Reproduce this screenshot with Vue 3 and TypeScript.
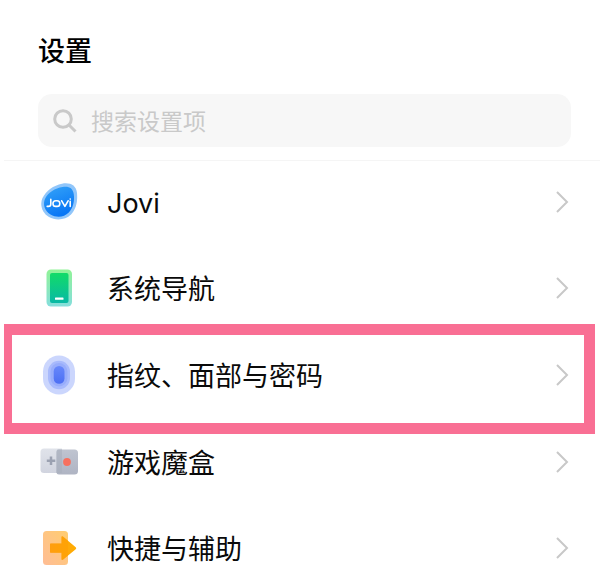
<script setup lang="ts">
import { ref } from 'vue'

type IconName = 'jovi' | 'navigation' | 'security' | 'games' | 'shortcuts'

interface SettingItem {
  icon: IconName
  label: string
  highlighted?: boolean
}

const query = ref('')

const items: SettingItem[] = [
  { icon: 'jovi', label: 'Jovi' },
  { icon: 'navigation', label: '系统导航' },
  { icon: 'security', label: '指纹、面部与密码', highlighted: true },
  { icon: 'games', label: '游戏魔盒' },
  { icon: 'shortcuts', label: '快捷与辅助' },
]
</script>

<template>
  <main class="settings">
    <header class="header">
      <h1 class="title">设置</h1>
      <label class="search">
        <svg class="search-icon" viewBox="0 0 26 26" aria-hidden="true">
          <circle cx="11" cy="11" r="8.3" />
          <path d="M17 17l6.5 6.5" />
        </svg>
        <input v-model="query" class="search-input" type="text" placeholder="搜索设置项" aria-label="搜索设置项" />
      </label>
    </header>

    <ul class="list">
      <li v-for="item in items" :key="item.icon" class="item" :class="{ highlighted: item.highlighted }">
        <a class="row" href="#">
          <svg v-if="item.icon === 'jovi'" class="icon" viewBox="0 0 40 40" aria-hidden="true">
            <defs>
              <linearGradient id="jovi-fill" x1="0" y1="0" x2="0.4" y2="1">
                <stop offset="0" stop-color="#35a4f8" />
                <stop offset="1" stop-color="#0876f5" />
              </linearGradient>
            </defs>
            <path d="M22 1.700C30 .3 36 3 37 11C37.800 19.500 36 27.500 31 32.500C25.500 38 16 39 9 35C2 31-.5 22.500 2.500 16C6 9 13.500 3.200 22 1.700Z" fill="#91c6fa" />
            <path d="M22.500 5C29 3.900 33 6.200 33.800 12.200C34.700 19.200 33 26 28.800 30.500C24 35.500 16.500 36 10.500 32.500C4.500 29 2.500 22 5.200 16.500C8.300 10.500 15 6.200 22.500 5Z" fill="url(#jovi-fill)" />
            <g fill="none" stroke="#fff" stroke-width="1.600" stroke-linecap="round" stroke-linejoin="round">
              <path d="M10.800 17.200v4.800q0 2.400-2.400 2.400h-1.200" />
              <rect x="13" y="18.800" width="6.800" height="5.600" rx="2.700" />
              <path d="M21.700 18.800l3.200 5.500 3.200-5.500M30.200 19.400v5M30.200 17v.1" />
            </g>
          </svg>

          <svg v-else-if="item.icon === 'navigation'" class="icon" viewBox="0 0 40 40" aria-hidden="true">
            <defs>
              <linearGradient id="nav-edge" x1="0" y1="0" x2="0" y2="1">
                <stop offset="0" stop-color="#91f397" />
                <stop offset="1" stop-color="#85dedc" />
              </linearGradient>
              <linearGradient id="nav-fill" x1="0" y1="0" x2="0" y2="1">
                <stop offset="0" stop-color="#12db68" />
                <stop offset="1" stop-color="#08b9a5" />
              </linearGradient>
            </defs>
            <rect x="6.500" y="1.500" width="25.500" height="37" rx="4.500" fill="url(#nav-edge)" />
            <rect x="10" y="5" width="18.500" height="30" rx="2" fill="url(#nav-fill)" />
            <rect x="15" y="29.500" width="8.500" height="2.300" rx=".6" fill="#fff" />
          </svg>

          <svg v-else-if="item.icon === 'security'" class="icon" viewBox="0 0 40 40" aria-hidden="true">
            <defs>
              <linearGradient id="print-core" x1="0" y1="0" x2="0" y2="1">
                <stop offset="0" stop-color="#6888fb" />
                <stop offset="1" stop-color="#4c6ff3" />
              </linearGradient>
            </defs>
            <rect x="3" y=".5" width="32" height="39" rx="16" fill="#cbd6fd" />
            <rect x="8" y="5.700" width="22" height="28.600" rx="11" fill="#a8bafc" />
            <rect x="10.500" y="8" width="17" height="23.500" rx="8.500" fill="#98adfb" />
            <rect x="13.700" y="11" width="10.800" height="17.800" rx="5.400" fill="url(#print-core)" />
          </svg>

          <svg v-else-if="item.icon === 'games'" class="icon" viewBox="0 0 40 40" aria-hidden="true">
            <defs>
              <linearGradient id="pad-left" x1="0" y1="0" x2="0" y2="1">
                <stop offset="0" stop-color="#e0e3ea" />
                <stop offset="1" stop-color="#d1d4df" />
              </linearGradient>
              <linearGradient id="pad-right" x1="0" y1="0" x2="0" y2="1">
                <stop offset="0" stop-color="#bfc4d0" />
                <stop offset="1" stop-color="#afb4c3" />
              </linearGradient>
            </defs>
            <path d="M4 6.500H22V31H4Q.5 31 .5 27.500V10Q.5 6.500 4 6.500Z" fill="url(#pad-left)" />
            <path d="M19 7.500H34.500Q38 7.500 38 11V29Q38 32.500 34.500 32.500H19Q16.500 32.500 16.500 30V10Q16.500 7.500 19 7.500Z" fill="url(#pad-right)" />
            <path d="M17.500 7.500H22V31H16.500V10Q16.500 8.500 17.500 7.500Z" fill="#a9afbd" opacity=".6" />
            <path d="M11 14.500v8.500M6.800 18.700h8.500" stroke="#9ba1b1" stroke-width="2.500" />
            <circle cx="27" cy="20" r="3.900" fill="#f7705f" />
          </svg>

          <svg v-else class="icon" viewBox="0 0 40 40" aria-hidden="true">
            <defs>
              <linearGradient id="door-fill" x1="0" y1="1" x2="1" y2="0">
                <stop offset="0" stop-color="#ffbd95" />
                <stop offset="1" stop-color="#ffcd70" />
              </linearGradient>
              <linearGradient id="arrow-fill" x1="0" y1="0" x2="1" y2="0">
                <stop offset="0" stop-color="#ff9f1e" />
                <stop offset="1" stop-color="#ffad00" />
              </linearGradient>
            </defs>
            <rect x="3" y="3" width="25" height="34" rx="3.500" fill="url(#door-fill)" />
            <path d="M10 16.300Q10 15.600 10.700 15.600H21.500V9.500Q21.500 7.500 23.200 8.700L35.700 19.200Q36.800 20.200 35.700 21.200L23.200 31.500Q21.500 32.700 21.500 30.700V24.700H10.700Q10 24.700 10 24Z" fill="url(#arrow-fill)" />
            <path d="M21.500 15.600V9.500Q21.500 7.500 23.200 8.700L28 12.700V27.600L23.200 31.500Q21.500 32.700 21.500 30.700V24.700H10.700Q10 24.700 10 24V16.300Q10 15.600 10.700 15.600Z" fill="#ff9d00" opacity=".5" />
          </svg>

          <span class="label">{{ item.label }}</span>

          <svg class="chevron" viewBox="0 0 14 24" aria-hidden="true">
            <path d="M2 2l10 10-10 10" />
          </svg>
        </a>
      </li>
    </ul>
  </main>
</template>

<style>
body {
  margin: 0;
  background: #fff;
  overflow-x: hidden;
}
</style>

<style scoped>
.settings {
  font-family: Inter, 'Noto Sans CJK SC', sans-serif;
  color: #0a0a0a;
}

.header {
  padding: 32px 29px 13px 38px;
}

.title {
  margin: 0 0 22px;
  font-size: 27px;
  line-height: 40px;
  font-weight: 500;
  color: #000;
}

.search {
  display: flex;
  align-items: center;
  gap: 13px;
  height: 53px;
  padding: 0 14px;
  box-sizing: border-box;
  border-radius: 14px;
  background: #f7f7f7;
}

.search-icon {
  flex: none;
  width: 26px;
  height: 26px;
  fill: none;
  stroke: #c9c9c9;
  stroke-width: 3;
}

.search-input {
  flex: 1;
  min-width: 0;
  padding: 2px 0 0;
  border: 0;
  outline: 0;
  background: transparent;
  font: inherit;
  font-size: 23px;
  line-height: 36px;
  color: #0a0a0a;
}

.search-input::placeholder {
  color: #c9c9c9;
  opacity: 1;
}

.list {
  margin: 0 0 0 4px;
  padding: 0;
  border-top: 1px solid #f5f5f5;
  list-style: none;
}

.item {
  position: relative;
}

.row {
  display: flex;
  align-items: center;
  height: 86px;
  padding: 0 31px 4px 36px;
  box-sizing: border-box;
  color: inherit;
  text-decoration: none;
}

.highlighted .row {
  height: 88px;
}

.highlighted::after {
  content: '';
  position: absolute;
  inset: -9px 5px -13px 0;
  border: 11px solid #f96f94;
  border-left-width: 8px;
  pointer-events: none;
}

.icon {
  flex: none;
  width: 40px;
  height: 40px;
}

.label {
  flex: 1;
  margin-left: 27px;
  padding-top: 4px;
  font-size: 27px;
  line-height: 40px;
}

.chevron {
  flex: none;
  width: 14px;
  height: 24px;
  fill: none;
  stroke: #c8c8c8;
  stroke-width: 2;
}
</style>
